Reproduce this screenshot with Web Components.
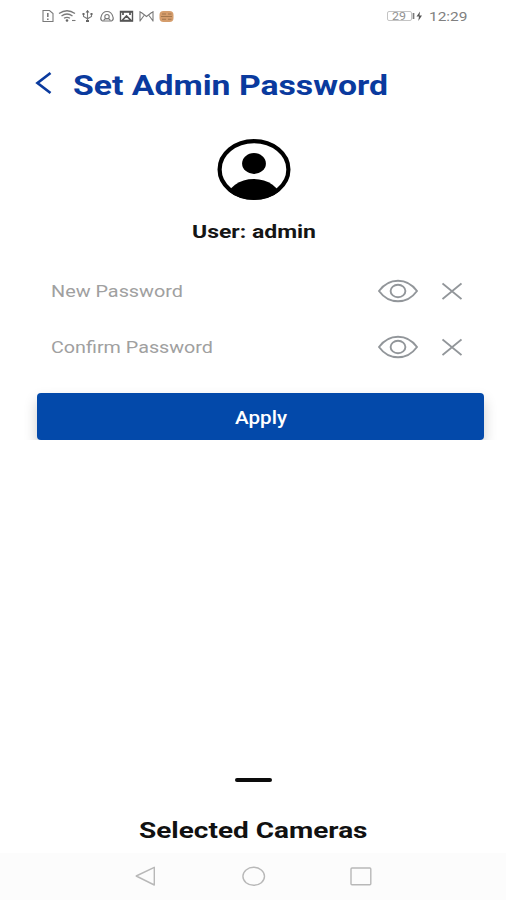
<!DOCTYPE html>
<html lang="en">
<head>
<meta charset="utf-8">
<title>Set Admin Password</title>
<style>
html,body{margin:0;height:100%;background:#fff}
</style>
</head>
<body>
<admin-screen></admin-screen>
<script>
const define = (name, html, setup) => customElements.define(name, class extends HTMLElement {
  connectedCallback() {
    if (this.shadowRoot) return;
    this.attachShadow({mode: 'open'}).innerHTML = html;
    if (setup) setup(this, this.shadowRoot);
  }
});

/* Wide label: the text is stretched horizontally to the length in "w". */
define('wide-text', `
<style>
:host{display:block;flex:none;white-space:nowrap;line-height:1}
span{display:inline-block;transform-origin:0 50%}
</style><span><slot></slot></span>`, (el, root) => {
  const w = +el.getAttribute('w'), s = root.querySelector('span');
  el.style.width = w + 'px';
  s.style.transform = `scaleX(${w / s.getBoundingClientRect().width})`;
});

define('status-bar', `
<style>
:host{display:flex;height:33px;padding:0 39px 1px 41px;align-items:center;justify-content:space-between;box-sizing:border-box;color:#777}
svg{display:block;fill:none;stroke:#7a7a7a;stroke-width:1.1}
.r{display:flex;align-items:center}
.b{display:flex;align-items:center;justify-content:center;width:25px;height:10px;box-sizing:border-box;border:1px solid #c4c4c4;border-radius:2px;font-size:11.500px;color:#929292}
.b wide-text{padding-top:1px}
.c{font-size:13.5px;color:#808080;padding-top:1px}
</style>
<svg width="136" height="16" viewBox="0 0 136 16">
<path d="M2 2.5h6.5l3.5 3v8H2z"/><path d="M6.8 5v4M6.8 10.5v1.5" stroke-width="1.6"/>
<path d="M18 5.5q8-5.5 16 0M20.5 8q5.500-4 11 0M23 10.300q3-2 6 0" stroke-width="1.3"/><circle cx="26" cy="12.500" r="1.300" fill="#666" stroke="none"/><path d="M31 12.500h3.500"/>
<path d="M46.500 2.500v11M42.500 6v2.500l4 2.300 4-2.300V6"/><path d="M44.500 4.500l2-2.500 2 2.500zM45 12h3v2h-3zM41.500 5h2v2h-2zM49.500 5h2v2h-2z" fill="#666" stroke="none"/>
<path d="M61.500 13q-2.500-1-1.500-4 1.500-5.500 6-5.500t6 5.500q1 3-1.500 4z"/><circle cx="66" cy="8.700" r="2.200"/><path d="M62.500 12.500l2-2h3l2 2"/>
<path d="M79.500 3.500h12v9.500h-12z" stroke="#555" stroke-width="1.400"/><path d="M80 4h11M82 4v3M89 4v3M81 12.500l4.500-4.500 4.500 4.500z" stroke="#555" stroke-width="1.700"/>
<path d="M99 3v10.500M112 3v10.500M99 3.500l6.500 5 6.500-5M99 13l4-5.500M112 13l-4-5.500"/>
<rect x="118.500" y="3" width="14" height="11" rx="4" fill="#d59d6c" stroke="none"/><path d="M121 6h4M127 6h3.500M120 8.500h11M121 11.200h4M127 11.200h3.500" stroke="#a3764c"/>
</svg>
<div class="r"><div class="b"><wide-text w="14">29</wide-text></div>
<svg width="17" height="14" viewBox="0 0 17 14"><path d="M1.500 4v6" stroke-width="1.700"/><path d="M8 2.500L4.500 7.500h2.500L6.300 12l3.700-5.500H7.500z" fill="#555" stroke="none"/></svg>
<wide-text class="c" w="38.500">12:29</wide-text></div>`);

define('page-title', `
<style>
:host{display:flex;align-items:center;height:57px;margin-top:23px;padding:0 0 0 35px;color:#0a3a9e;font-size:28px;font-weight:700}
svg{display:block;margin:0 19.500px 3px 0}
wide-text{padding-top:2px}
</style>
<svg width="18" height="24" viewBox="0 0 18 24" fill="none" stroke="#0a3a9e" stroke-width="2.700"><path d="M15.500 2L2.500 12l13 10"/></svg>
<wide-text w="315"><slot></slot></wide-text>`);

define('user-card', `
<style>
:host{display:flex;flex-direction:column;align-items:center;padding-top:26px;color:#151515;font-size:18px;font-weight:700}
svg{display:block;flex:none;margin:0 0 23px 1.500px}
wide-text{margin-left:1px}
</style>
<svg width="74" height="61" viewBox="0 0 74 61"><defs><clipPath id="c"><ellipse cx="37" cy="30.500" rx="36.500" ry="30.300"/></clipPath></defs>
<ellipse cx="37" cy="30.500" rx="34.400" ry="28.300" fill="#fff" stroke="#000" stroke-width="4.200"/>
<ellipse cx="37" cy="24.500" rx="11.900" ry="10.400"/><ellipse cx="36.800" cy="59.500" rx="26.500" ry="19.500" clip-path="url(#c)"/></svg>
<wide-text w="124"><slot></slot></wide-text>`);

define('password-field', `
<style>
:host{display:flex;align-items:center;height:56px;padding:0 44.500px 0 50.500px;color:#a0a0a0;font-size:16.700px}
wide-text{padding-top:2px}
svg{display:block;fill:none;stroke:#92969a;stroke-width:1.900}
.e{margin-left:auto;margin-right:23.500px}
</style>
<wide-text></wide-text>
<svg class="e" width="40" height="24" viewBox="0 0 40 24"><path d="M1 12Q8.500 1.700 20 1.700T39 12Q31.500 22.300 20 22.300T1 12z"/><ellipse cx="20" cy="12" rx="7.400" ry="6.200"/></svg>
<svg width="20" height="18" viewBox="0 0 20 18"><path d="M.500 1.500l19 15.500M19.500 1.500l-19 15.500"/></svg>`, (el, root) => {
  const old = root.querySelector('wide-text'), t = document.createElement('wide-text');
  t.setAttribute('w', el.getAttribute('w'));
  t.textContent = el.getAttribute('label');
  old.replaceWith(t);
});

define('apply-button', `
<style>
:host{display:block;padding:6px 22px 0 22px;margin-top:12px;overflow:hidden}
button{display:flex;align-items:center;justify-content:center;width:447px;height:47px;margin:0 15px;padding:4px 6px 0 0;box-sizing:border-box;border:0;border-radius:4px;background:#0349aa;box-shadow:0 7px 14px rgba(0,0,0,.2);color:#fff;font:500 17.500px Roboto,sans-serif}
</style>
<button><wide-text w="52"><slot></slot></wide-text></button>`);

define('camera-sheet', `
<style>
:host{display:flex;flex-direction:column;align-items:center;margin-top:auto;height:75px;color:#111;font-size:22.300px;font-weight:700}
i{width:37px;height:4px;border-radius:2px;background:#0c0c0c;margin:0 0 37px 1px}
wide-text{margin-left:1px}
</style><i></i><wide-text w="228.500"><slot></slot></wide-text>`);

define('nav-bar', `
<style>
:host{display:block;height:47px;background:#fcfcfc}
svg{display:block;fill:none;stroke:#b8b8b8;stroke-width:1.400}
</style>
<svg width="506" height="47" viewBox="0 0 506 47"><path d="M136.200 23L154.300 14.300v17.700z" stroke-linejoin="round"/><ellipse cx="253.700" cy="23.300" rx="10.800" ry="9"/><rect x="351" y="15" width="19.800" height="16.700" rx="1"/></svg>`);

define('admin-screen', `
<style>
:host{display:flex;flex-direction:column;width:506px;height:900px;background:#fff;font-family:Roboto,sans-serif;overflow:hidden}
user-card{height:125px;box-sizing:border-box}
section{padding-top:25px}
</style>
<status-bar></status-bar>
<page-title>Set Admin Password</page-title>
<user-card>User: admin</user-card>
<section>
<password-field label="New Password" w="132"></password-field>
<password-field label="Confirm Password" w="162"></password-field>
</section>
<apply-button>Apply</apply-button>
<camera-sheet>Selected Cameras</camera-sheet>
<nav-bar></nav-bar>`);
</script>
</body>
</html>
